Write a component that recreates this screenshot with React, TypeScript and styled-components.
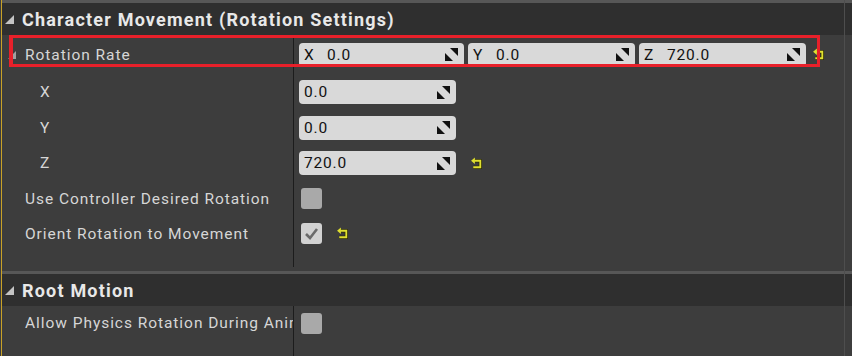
import styled, { createGlobalStyle } from 'styled-components';

const GlobalStyle = createGlobalStyle`
  html, body {
    margin: 0;
    padding: 0;
    background: #3d3d3d;
    overflow: hidden;
  }
  * { box-sizing: border-box; }
`;

const Page = styled.div`
  position: relative;
  width: 852px;
  height: 356px;
  padding-left: 1px;
  background: #3d3d3d;
  font-family: Roboto, 'Liberation Sans', sans-serif;
`;

const Frame = styled.div`
  height: 100%;
  border-left: 1px solid #c9a227;
  display: flex;
  flex-direction: column;
`;

const TopStrip = styled.div`
  height: 3px;
  background: #575757;
`;

const SectionGap = styled.div`
  height: 3px;
  background: #575757;
`;

const Header = styled.div`
  height: 32px;
  background: #2f2f2f;
  display: flex;
  align-items: center;
  gap: 8px;
  padding-left: 3px;
  color: #e8e8e8;
  font-size: 18px;
  font-weight: 700;
  letter-spacing: 1.2px;
`;

const Body = styled.div<{ $pad: number }>`
  display: flex;
  flex-direction: column;
  padding-bottom: ${({ $pad }) => $pad}px;
`;

const Row = styled.div<{ $h: number }>`
  display: grid;
  grid-template-columns: 291px 1px 1fr;
  height: ${({ $h }) => $h}px;
`;

const Label = styled.div<{ $indent: number }>`
  display: flex;
  align-items: center;
  gap: 8px;
  padding-left: ${({ $indent }) => $indent}px;
  color: #d6d6d6;
  font-size: 15.5px;
  letter-spacing: 0.95px;
  white-space: nowrap;
  overflow: hidden;
`;

const Divider = styled.div`
  background: #1c1c1c;
`;

const Value = styled.div`
  display: flex;
  align-items: center;
  gap: 4px;
  padding-left: 5px;
`;

const NumBox = styled.div<{ $w: number }>`
  width: ${({ $w }) => $w}px;
  height: 24px;
  border-radius: 4px;
  background: #d9d9d9;
  display: flex;
  align-items: center;
  padding: 0 6px 0 5px;
  color: #111;
  font-size: 15.5px;
  letter-spacing: 0.8px;
`;

const Axis = styled.span`
  width: 23px;
`;

const NumText = styled.span`
  flex: 1;
`;

const Check = styled.div<{ $on?: boolean }>`
  width: 21px;
  height: 21px;
  margin-left: 2px;
  border-radius: 3px;
  background: ${({ $on }) => ($on ? '#d2d2d2' : '#a9a9a9')};
  display: flex;
  align-items: center;
  justify-content: center;
`;

const ResetSlot = styled.div`
  margin-left: 10px;
  display: flex;
  align-items: center;
`;

const Highlight = styled.div`
  position: absolute;
  left: 9px;
  top: 35px;
  width: 811px;
  height: 32px;
  border: 3px solid #e8202a;
  border-left-width: 4px;
  pointer-events: none;
`;

const ScrollLine = styled.div`
  position: absolute;
  left: 844px;
  top: 0;
  bottom: 0;
  width: 1px;
  background: #4e4e4e;
`;

const Arrow = ({ size, color }: { size: number; color: string }) => (
  <svg width={size} height={size} viewBox="0 0 10 10">
    <polygon points="10,0 10,10 0,10" fill={color} />
  </svg>
);

const Spinner = () => (
  <svg width="13" height="13" viewBox="0 0 13 13">
    <polygon points="5,0 13,0 13,8" fill="#111" />
    <polygon points="0,5 0,13 8,13" fill="#111" />
  </svg>
);

const ResetIcon = () => (
  <svg width="13" height="13" viewBox="0 0 12 12">
    <path d="M4 3.5 H9.5 V9.5 H3" fill="none" stroke="#2a2a00" strokeWidth="3" />
    <path d="M4 3.5 H9.5 V9.5 H3" fill="none" stroke="#e0e030" strokeWidth="1.7" />
    <polygon points="1,3.5 4.5,0.5 4.5,6.5" fill="#e0e030" />
  </svg>
);

const Tick = () => (
  <svg width="15" height="13" viewBox="0 0 15 13">
    <path d="M2 7 L6 11 L13 2" fill="none" stroke="#6a6a6a" strokeWidth="2.6" />
  </svg>
);

const rotation = [
  { axis: 'X', value: '0.0' },
  { axis: 'Y', value: '0.0' },
  { axis: 'Z', value: '720.0', changed: true },
];

export default function App() {
  return (
    <Page>
      <GlobalStyle />
      <Frame>
        <TopStrip />
        <Header>
          <Arrow size={9} color="#c4c4c4" />
          Character Movement (Rotation Settings)
        </Header>
        <Body $pad={4}>
          <Row $h={39}>
            <Label $indent={6}>
              <Arrow size={8} color="#a0a0a0" />
              <span style={{ marginLeft: 1 }}>Rotation Rate</span>
            </Label>
            <Divider />
            <Value>
              {rotation.map((r, i) => (
                <NumBox key={r.axis} $w={i === 0 ? 165 : 167}>
                  <Axis>{r.axis}</Axis>
                  <NumText>{r.value}</NumText>
                  <Spinner />
                </NumBox>
              ))}
              <ResetSlot style={{ marginLeft: 2 }}>
                <ResetIcon />
              </ResetSlot>
            </Value>
          </Row>
          {rotation.map(r => (
            <Row key={r.axis} $h={r.axis === 'Y' ? 35 : 36}>
              <Label $indent={38}>{r.axis}</Label>
              <Divider />
              <Value>
                <NumBox $w={157}>
                  <NumText>{r.value}</NumText>
                  <Spinner />
                </NumBox>
                {r.changed && (
                  <ResetSlot>
                    <ResetIcon />
                  </ResetSlot>
                )}
              </Value>
            </Row>
          ))}
          <Row $h={35}>
            <Label $indent={23}>Use Controller Desired Rotation</Label>
            <Divider />
            <Value>
              <Check />
            </Value>
          </Row>
          <Row $h={35}>
            <Label $indent={23}>Orient Rotation to Movement</Label>
            <Divider />
            <Value>
              <Check $on>
                <Tick />
              </Check>
              <ResetSlot>
                <ResetIcon />
              </ResetSlot>
            </Value>
          </Row>
          <Row $h={16}>
            <div />
            <Divider />
            <div />
          </Row>
        </Body>
        <SectionGap />
        <Header>
          <Arrow size={9} color="#c4c4c4" />
          Root Motion
        </Header>
        <Body $pad={0}>
          <Row $h={50}>
            <Label $indent={23} style={{ alignItems: 'flex-start', paddingTop: 8 }}>
              Allow Physics Rotation During Animation
            </Label>
            <Divider />
            <Value style={{ alignItems: 'flex-start', paddingTop: 7 }}>
              <Check />
            </Value>
          </Row>
        </Body>
      </Frame>
      <Highlight />
      <ScrollLine />
    </Page>
  );
}
